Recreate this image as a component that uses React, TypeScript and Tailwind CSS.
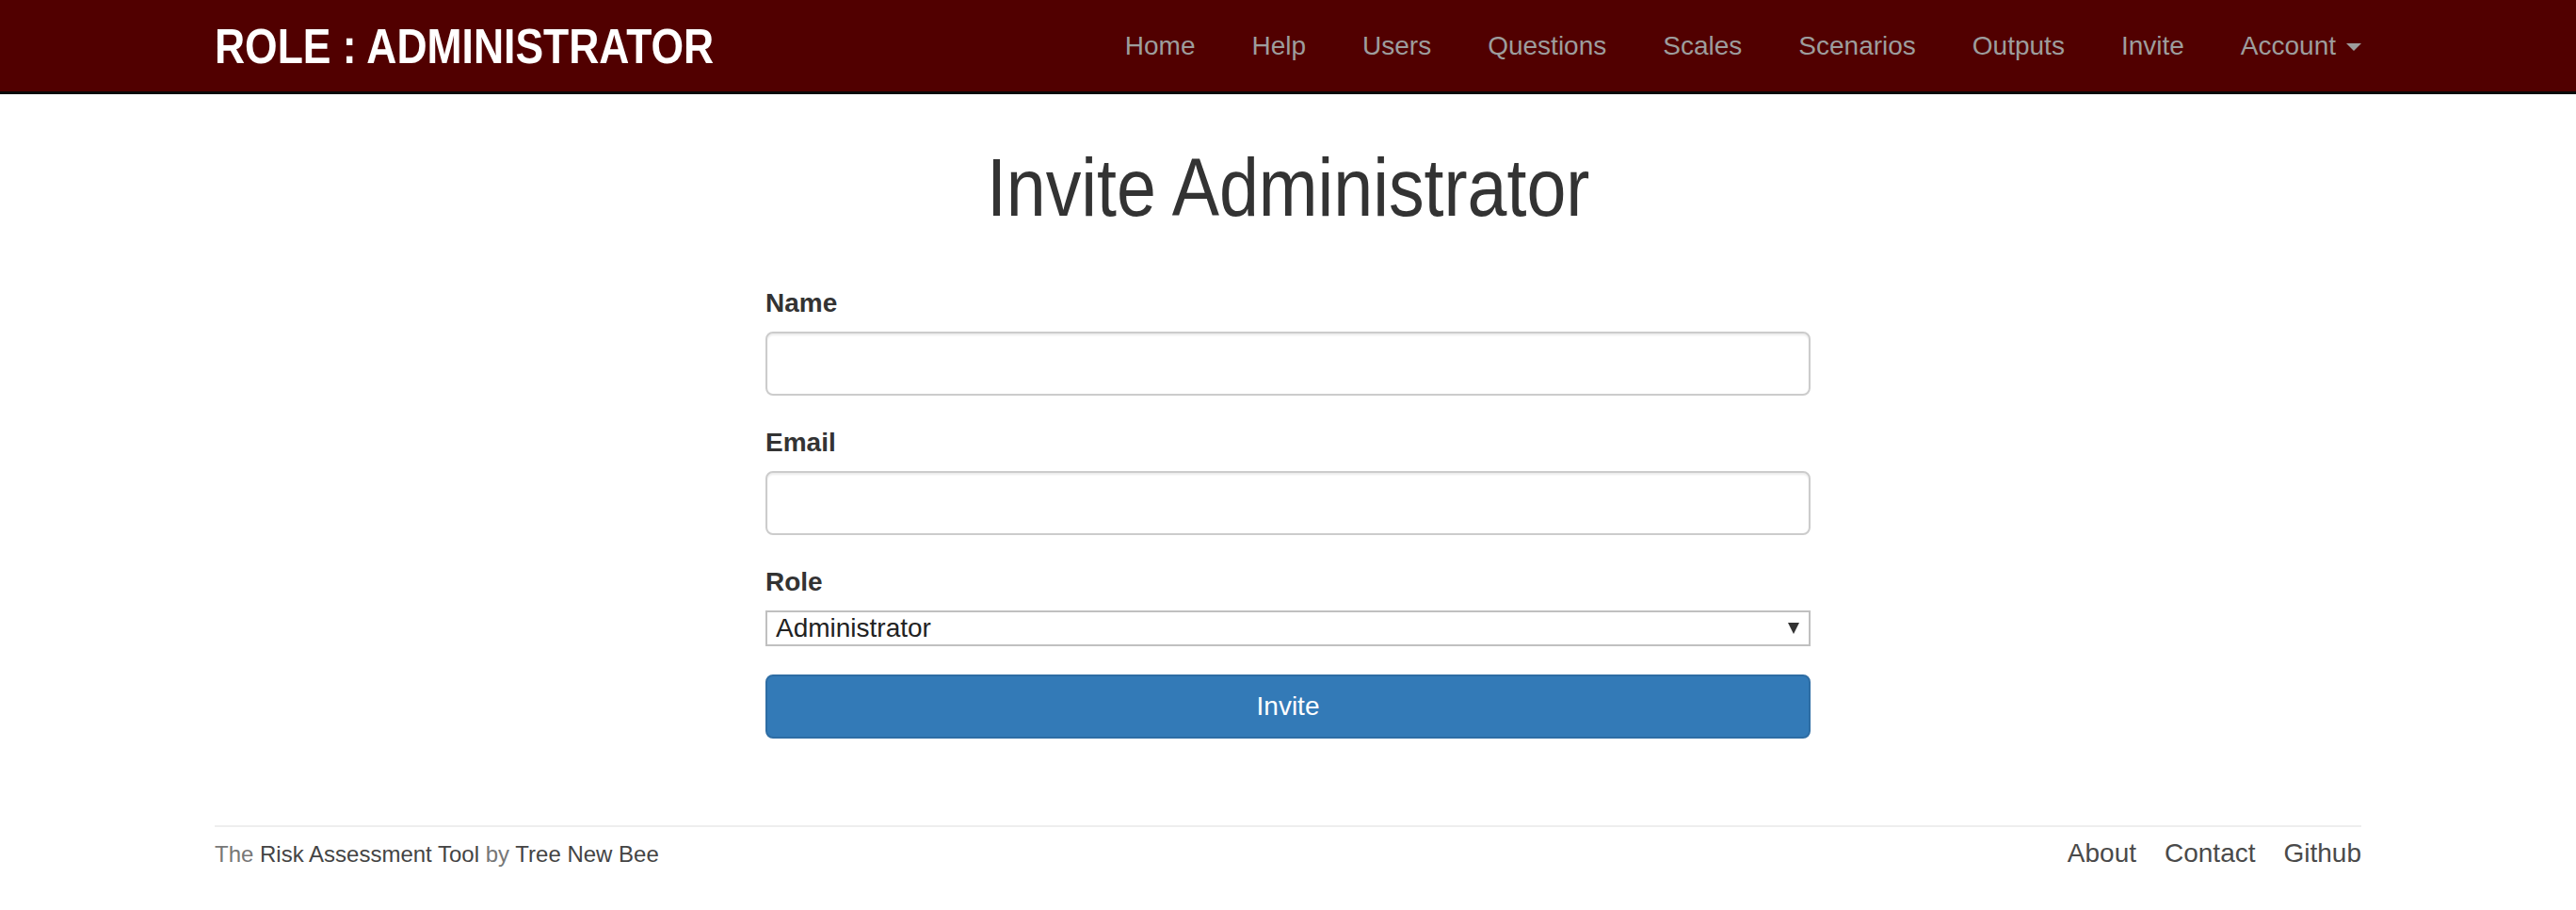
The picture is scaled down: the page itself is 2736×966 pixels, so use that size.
import React from 'react';

const navLinks = ['Home', 'Help', 'Users', 'Questions', 'Scales', 'Scenarios', 'Outputs', 'Invite'];
const footerLinks = ['About', 'Contact', 'Github'];

function Field({ label, type }: { label: string; type: string }) {
  return (
    <div className="mb-[30px]">
      <label className="block mb-[10px] text-[28px] leading-[40px] font-bold text-[#333]">{label}</label>
      <input
        type={type}
        className="block w-full h-[68px] px-[24px] text-[28px] border-2 border-[#ccc] rounded-[8px] shadow-[inset_0_2px_2px_rgba(0,0,0,0.075)] outline-none"
      />
    </div>
  );
}

export default function App() {
  return (
    <div className="min-h-screen bg-white text-[#333] font-['Liberation_Sans',Arial,sans-serif]">
      {/* Navbar */}
      <nav className="h-[100px] bg-[#510000] border-b-[3px] border-[#0a0a0a]">
        <div className="mx-auto w-[2280px] h-full flex items-center justify-between">
          <a href="#" className="block origin-left scale-x-[0.855] text-[52px] leading-none font-bold text-white whitespace-nowrap">
            ROLE : ADMINISTRATOR
          </a>
          <ul className="flex items-center -mr-[30px]">
            {navLinks.map((l) => (
              <li key={l}>
                <a href="#" className="block px-[30px] text-[28px] leading-[40px] text-[#9d9d9d]">{l}</a>
              </li>
            ))}
            <li>
              <a href="#" className="flex items-center px-[30px] text-[28px] leading-[40px] text-[#9d9d9d]">
                Account
                <span className="ml-[11px] mt-[2px] w-0 h-0 border-x-[8px] border-x-transparent border-t-[8px] border-t-[#9d9d9d]" />
              </a>
            </li>
          </ul>
        </div>
      </nav>

      {/* Main */}
      <main className="mx-auto w-[2280px]">
        <h1 className="mt-[55px] mb-[59px] text-center text-[88px] leading-none font-normal text-[#333]">
          <span className="inline-block scale-x-[0.856] whitespace-nowrap">Invite Administrator</span>
        </h1>

        <form className="mx-auto w-[1110px]" onSubmit={(e) => e.preventDefault()}>
          <Field label="Name" type="text" />
          <Field label="Email" type="email" />
          <div className="mb-[30px]">
            <label className="block mb-[10px] text-[28px] leading-[40px] font-bold text-[#333]">Role</label>
            <div className="relative">
              <select className="block w-full h-[38px] appearance-none bg-white pl-[9px] text-[28px] leading-[34px] text-[#222] border-2 border-[#c0c0c0] rounded-none outline-none">
                <option>Administrator</option>
                <option>User</option>
              </select>
              <svg className="absolute right-[12px] top-[13px] w-[12px] h-[12px] pointer-events-none" viewBox="0 0 12 12">
                <path d="M0 0h12L6 12z" fill="#333" />
              </svg>
            </div>
          </div>
          <button
            type="submit"
            className="block w-full h-[68px] bg-[#337ab7] border-2 border-[#2e6da4] rounded-[8px] text-white text-[28px] leading-[40px]"
          >
            Invite
          </button>
        </form>

        {/* Footer */}
        <footer className="mt-[92px] border-t-2 border-[#eee] pt-[8px] flex items-baseline justify-between">
          <p className="text-[24px] leading-[40px] text-[#777]">
            The <a href="#" className="text-[#444]">Risk Assessment Tool</a> by{' '}
            <a href="#" className="text-[#444]">Tree New Bee</a>
          </p>
          <ul className="flex gap-[30px]">
            {footerLinks.map((l) => (
              <li key={l}>
                <a href="#" className="text-[28px] leading-[40px] text-[#4a4a4a]">{l}</a>
              </li>
            ))}
          </ul>
        </footer>
      </main>
    </div>
  );
}
